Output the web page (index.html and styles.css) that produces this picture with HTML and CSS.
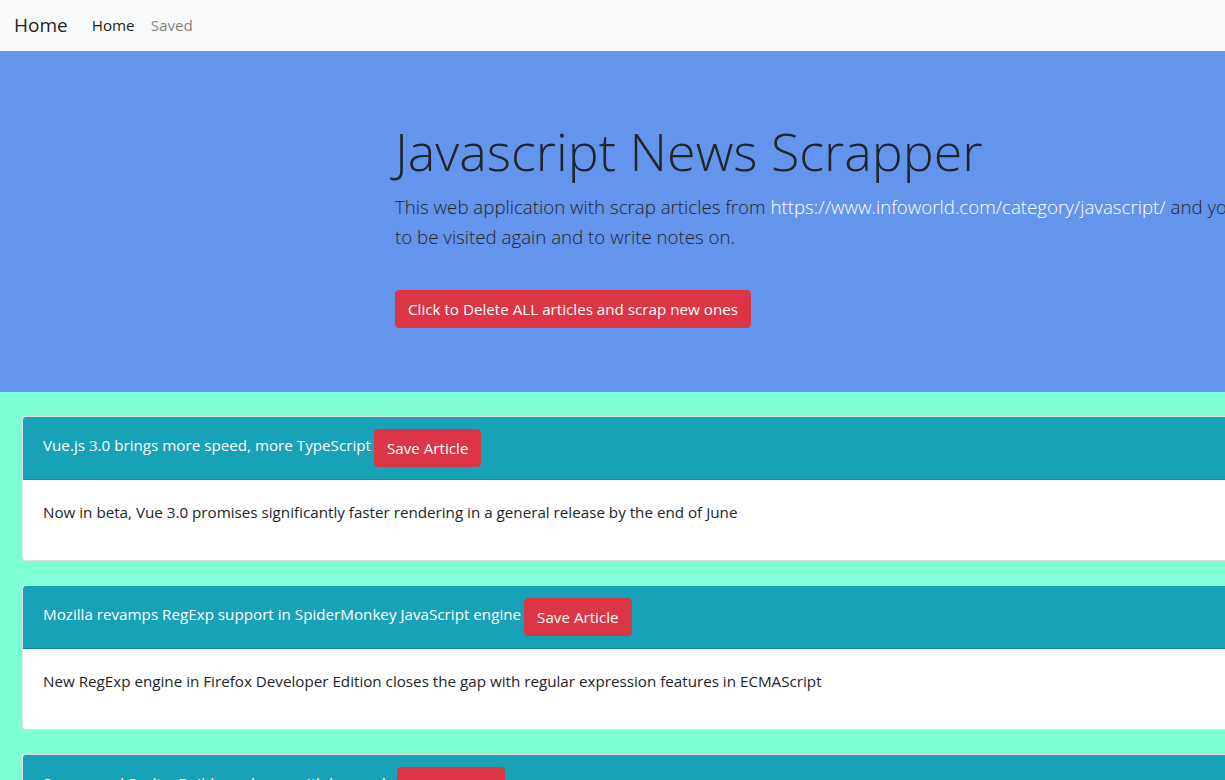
FILE: index.html
```html
<!DOCTYPE html>
<html lang="en">
<head>
<meta charset="utf-8">
<title>Javascript News Scrapper</title>
<link rel="stylesheet" href="styles.css">
</head>
<body>
<div class="page">
  <nav class="navbar">
    <a class="brand" href="#">Home</a>
    <ul class="nav">
      <li><a class="nav-link active" href="#">Home</a></li>
      <li><a class="nav-link" href="#">Saved</a></li>
    </ul>
  </nav>

  <header class="jumbotron">
    <div class="container">
      <h1 class="display">Javascript News Scrapper</h1>
      <p class="lead">This web application with scrap articles from <a class="lead-link" href="#">https://www.infoworld.com/category/javascript/</a> and you can save the ones you like<br>to be visited again and to write notes on.</p>
      <button class="btn btn-danger">Click to Delete ALL articles and scrap new ones</button>
    </div>
  </header>

  <main class="articles">
    <div class="card">
      <div class="card-header">
        <span class="card-title">Vue.js 3.0 brings more speed, more TypeScript</span>
        <button class="btn btn-danger btn-save">Save Article</button>
      </div>
      <div class="card-body">
        <p>Now in beta, Vue 3.0 promises significantly faster rendering in a general release by the end of June</p>
      </div>
    </div>
    <div class="card">
      <div class="card-header">
        <span class="card-title">Mozilla revamps RegExp support in SpiderMonkey JavaScript engine</span>
        <button class="btn btn-danger btn-save">Save Article</button>
      </div>
      <div class="card-body">
        <p>New RegExp engine in Firefox Developer Edition closes the gap with regular expression features in ECMAScript</p>
      </div>
    </div>
    <div class="card">
      <div class="card-header">
        <span class="card-title">Sapper and Svelte: Build a web app with less code</span>
        <button class="btn btn-danger btn-save">Save Article</button>
      </div>
      <div class="card-body">
        <p>A look at building fast, compiled web applications with Svelte and its companion framework</p>
      </div>
    </div>
  </main>
</div>
</body>
</html>
```
FILE: styles.css
```css
html, body {
  margin: 0;
  padding: 0;
  overflow: hidden;
}

body {
  font-family: "Open Sans", sans-serif;
  font-size: 15.2px;
  line-height: 24px;
  color: #212529;
  background: #7fffd4;
}

.page {
  width: 1900px;
}

/* Navbar */
.navbar {
  height: 51px;
  box-sizing: border-box;
  padding: 0 14px 2px;
  display: flex;
  align-items: center;
  background: #f8f9fa;
}

.brand {
  font-size: 19px;
  line-height: 30px;
  color: rgba(0, 0, 0, 0.9);
  text-decoration: none;
  margin-right: 16px;
}

.nav {
  display: flex;
  list-style: none;
  margin: 0;
  padding: 0;
}

.nav-link {
  display: block;
  padding: 8px;
  color: rgba(0, 0, 0, 0.5);
  text-decoration: none;
}

.nav-link.active {
  color: rgba(0, 0, 0, 0.9);
}

/* Jumbotron */
.jumbotron {
  background: #6495ed;
  padding: 66px 0 64px;
}

.container {
  width: 1140px;
  box-sizing: border-box;
  padding: 0 15px;
  margin: 0 auto;
}

.display {
  font-size: 52px;
  font-weight: 300;
  line-height: 67px;
  margin: 0 0 8px;
}

.lead {
  font-size: 18.7px;
  font-weight: 300;
  line-height: 30px;
  margin: 0 0 38px;
}

.lead-link {
  color: #fff;
  text-decoration: none;
}

/* Buttons */
.btn {
  font-family: inherit;
  font-size: 15.2px;
  line-height: 24px;
  padding: 6px 12px;
  border: 1px solid transparent;
  border-radius: 4px;
  cursor: pointer;
  display: inline-block;
}

.btn-danger {
  background: #dc3545;
  border-color: #dc3545;
  color: #fff;
}

/* Articles */
.articles {
  padding: 24px 22px;
}

.card {
  background: #fff;
  border: 1px solid rgba(0, 0, 0, 0.125);
  border-radius: 4px;
  margin-bottom: 24px;
  overflow: hidden;
}

.card-header {
  display: flex;
  align-items: center;
  padding: 12px 20px;
  background: #17a2b8;
  border-bottom: 1px solid rgba(0, 0, 0, 0.125);
}

.card-title {
  color: #fff;
  margin-bottom: 6px;
}

.btn-save {
  margin-left: 3px;
}

.card-body {
  padding: 20px;
}

.card-body p {
  margin: 0 0 16px;
}
```
